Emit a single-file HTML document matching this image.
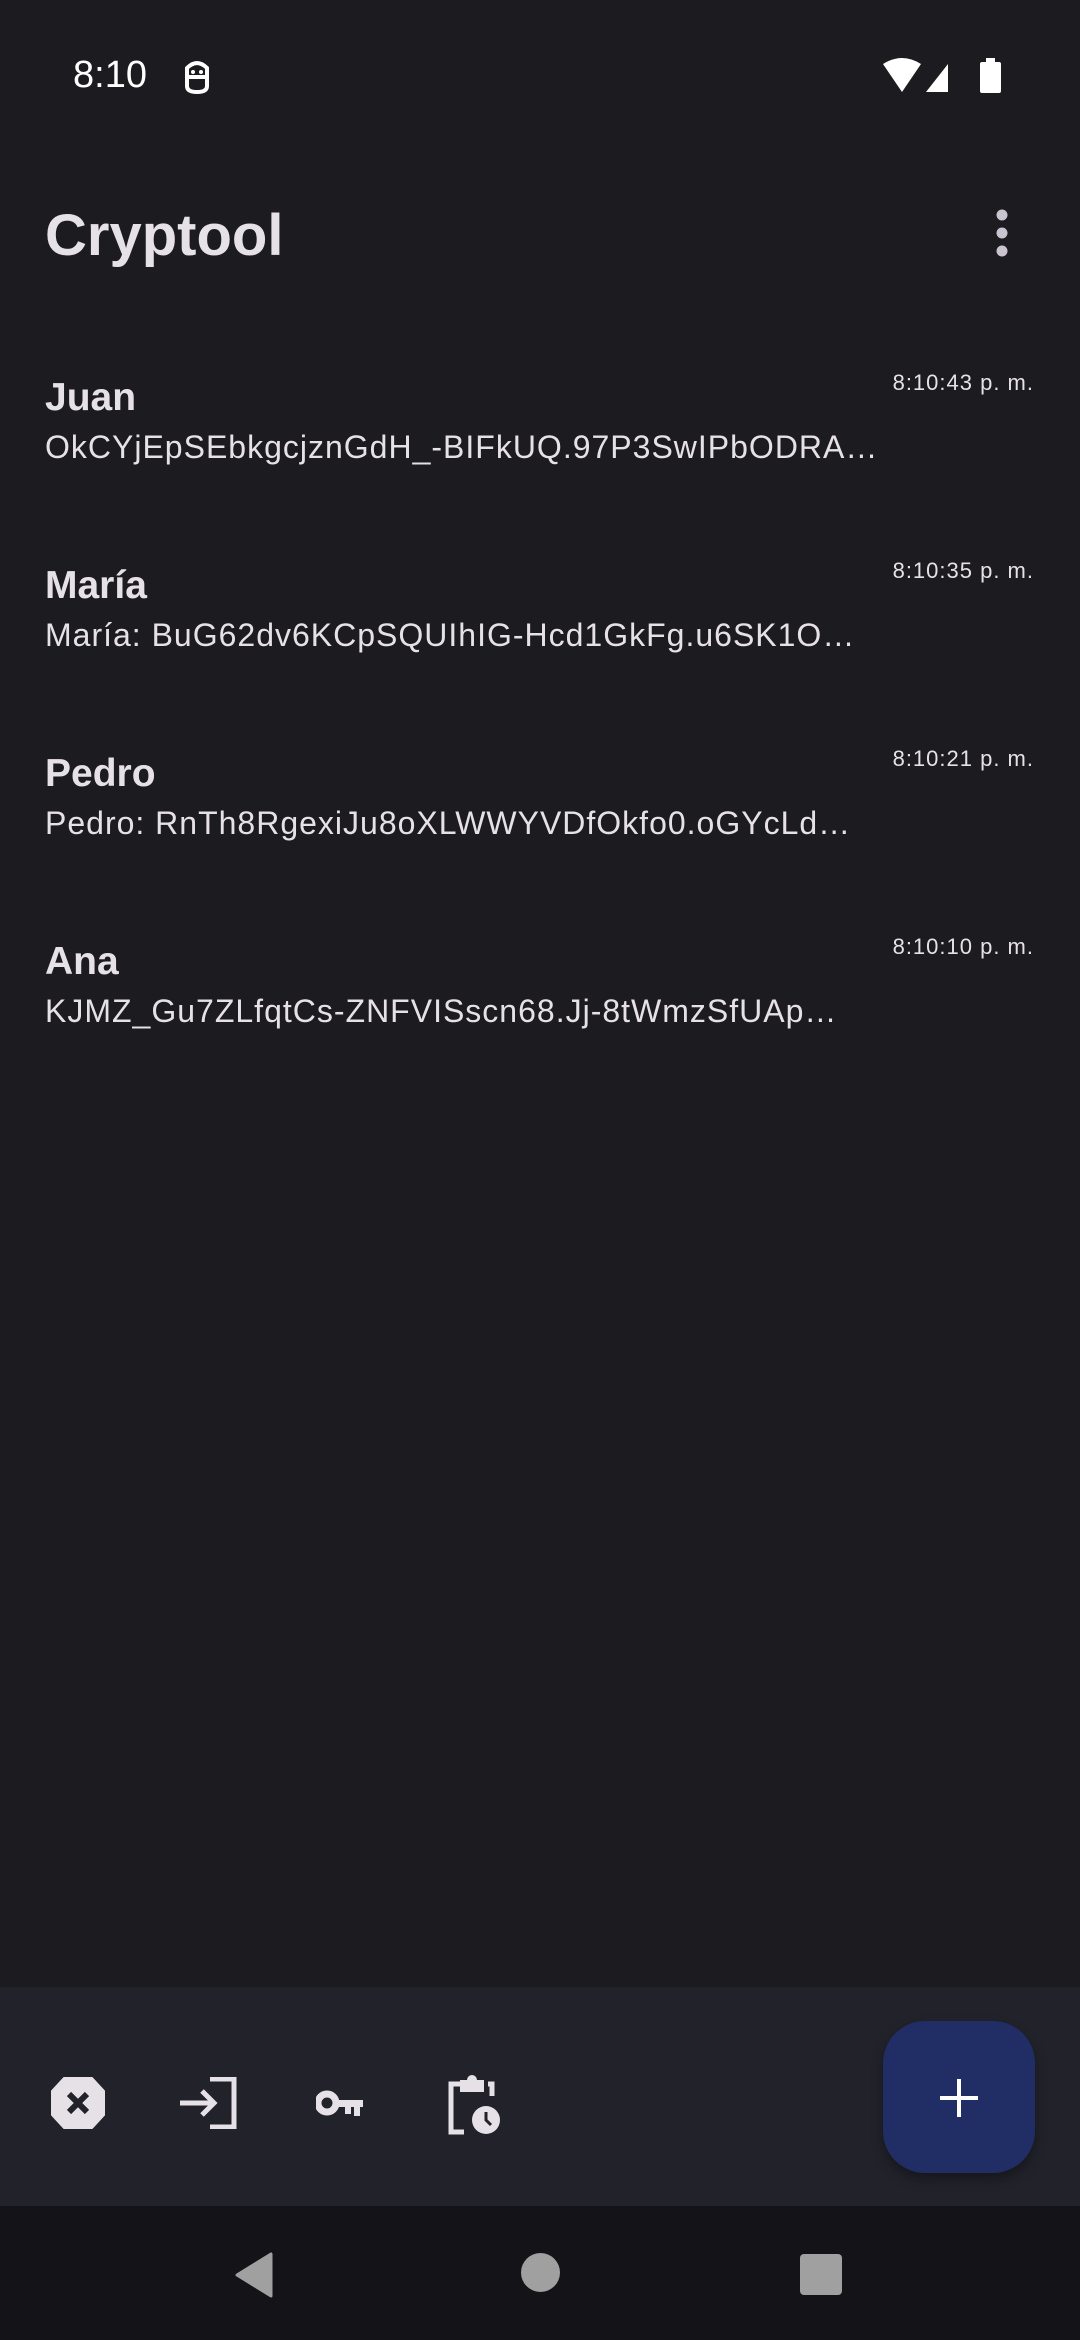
<!DOCTYPE html>
<html><head><meta charset="utf-8"><style>
*{margin:0;padding:0;box-sizing:border-box}
body{width:1080px;height:2340px;background:#1c1b20;position:relative;overflow:hidden;font-family:"Liberation Sans",Roboto,sans-serif;color:#e6e1e6}
.a{position:absolute;white-space:nowrap;line-height:1}
.name{font-size:39px;left:45px;font-weight:bold}
.sub{font-size:32px;left:45px;letter-spacing:1px}
.ts{font-size:22px;right:46px;letter-spacing:1px}
</style></head><body>
<div class="a" style="left:73px;top:56px;font-size:38px;color:#fff">8:10</div>
<svg class="a" style="left:182px;top:58px" width="30" height="36" viewBox="0 0 30 36"><path d="M5 10 Q15 0 25 10 L25 28 Q25 34 15 34 Q5 34 5 28Z M5 19H25" fill="none" stroke="#fff" stroke-width="4"/><circle cx="11" cy="14" r="2" fill="#fff"/><circle cx="19" cy="14" r="2" fill="#fff"/></svg>
<svg class="a" style="left:882px;top:58px" width="120" height="36" viewBox="0 0 120 36"><path d="M1 6 Q20 -6 39 6 L20 34Z" fill="#fff"/><path d="M44 34 L66 6 L66 34Z" fill="#fff"/><rect x="98" y="4" width="21" height="31" rx="2" fill="#fff"/><rect x="104" y="0" width="9" height="5" fill="#fff"/></svg>
<div class="a" style="left:45px;top:207px;font-size:58px;font-weight:bold;color:#e6e1e6">Cryptool</div>
<svg class="a" style="left:992px;top:208px" width="20" height="50"><circle cx="10" cy="7" r="5.5" fill="#cac4d0"/><circle cx="10" cy="25" r="5.5" fill="#cac4d0"/><circle cx="10" cy="43" r="5.5" fill="#cac4d0"/></svg>

<div class="a name" style="top:378px">Juan</div>
<div class="a ts" style="top:372px">8:10:43 p. m.</div>
<div class="a sub" style="top:431px">OkCYjEpSEbkgcjznGdH_-BIFkUQ.97P3SwIPbODRA…</div>

<div class="a name" style="top:566px">María</div>
<div class="a ts" style="top:560px">8:10:35 p. m.</div>
<div class="a sub" style="top:619px">María: BuG62dv6KCpSQUIhIG-Hcd1GkFg.u6SK1O…</div>

<div class="a name" style="top:754px">Pedro</div>
<div class="a ts" style="top:748px">8:10:21 p. m.</div>
<div class="a sub" style="top:807px">Pedro: RnTh8RgexiJu8oXLWWYVDfOkfo0.oGYcLd…</div>

<div class="a name" style="top:942px">Ana</div>
<div class="a ts" style="top:936px">8:10:10 p. m.</div>
<div class="a sub" style="top:995px">KJMZ_Gu7ZLfqtCs-ZNFVISscn68.Jj-8tWmzSfUAp…</div>

<div class="a" style="left:0;top:1987px;width:1080px;height:219px;background:#22222b"></div>
<svg class="a" style="left:50px;top:2077px" width="56" height="52" viewBox="0 0 56 52"><path d="M14 1H42L54 14V38L42 51H14L2 38V14Z" fill="#e6e1e6" stroke="#e6e1e6" stroke-linejoin="round" stroke-width="2"/><path d="M19 17L37 35M37 17L19 35" stroke="#22222b" stroke-width="6"/></svg>
<svg class="a" style="left:178px;top:2077px" width="62" height="52" viewBox="0 0 62 52"><path d="M2 26H34M24 14L36 26L24 38" fill="none" stroke="#e6e1e6" stroke-width="5"/><path d="M32 2H56V50H32" fill="none" stroke="#e6e1e6" stroke-width="5"/></svg>
<svg class="a" style="left:316px;top:2090px" width="50" height="30" viewBox="0 0 50 30"><circle cx="11" cy="13" r="9" fill="none" stroke="#e6e1e6" stroke-width="7"/><path d="M18 10H47V17H44V26H38V17H35V24H29V17H18Z" fill="#e6e1e6"/></svg>
<svg class="a" style="left:448px;top:2074px" width="54" height="62" viewBox="0 0 54 62"><path d="M12 10H3V58H16M40 10H44V22" fill="none" stroke="#e6e1e6" stroke-width="5"/><rect x="12" y="6" width="24" height="12" fill="#e6e1e6"/><circle cx="24" cy="6" r="5" fill="#e6e1e6"/><circle cx="38" cy="46" r="14" fill="#e6e1e6"/><path d="M38 38V46L43 51" stroke="#22222b" stroke-width="3" fill="none"/></svg>
<div class="a" style="left:883px;top:2021px;width:152px;height:152px;border-radius:42px;background:#212d65;box-shadow:0 6px 12px rgba(0,0,0,.35)"></div>
<svg class="a" style="left:939px;top:2078px" width="40" height="40"><path d="M20 1V39M1 20H39" stroke="#fff" stroke-width="4"/></svg>

<div class="a" style="left:0;top:2206px;width:1080px;height:134px;background:#141318"></div>
<svg class="a" style="left:234px;top:2252px" width="42" height="46" viewBox="0 0 42 46"><path d="M37 2V44L3 23Z" fill="#a0a0a0" stroke="#a0a0a0" stroke-linejoin="round" stroke-width="3"/></svg>
<div class="a" style="left:521px;top:2253px;width:39px;height:39px;border-radius:50%;background:#a0a0a0"></div>
<div class="a" style="left:800px;top:2254px;width:42px;height:41px;border-radius:4px;background:#a0a0a0"></div>
</body></html>
